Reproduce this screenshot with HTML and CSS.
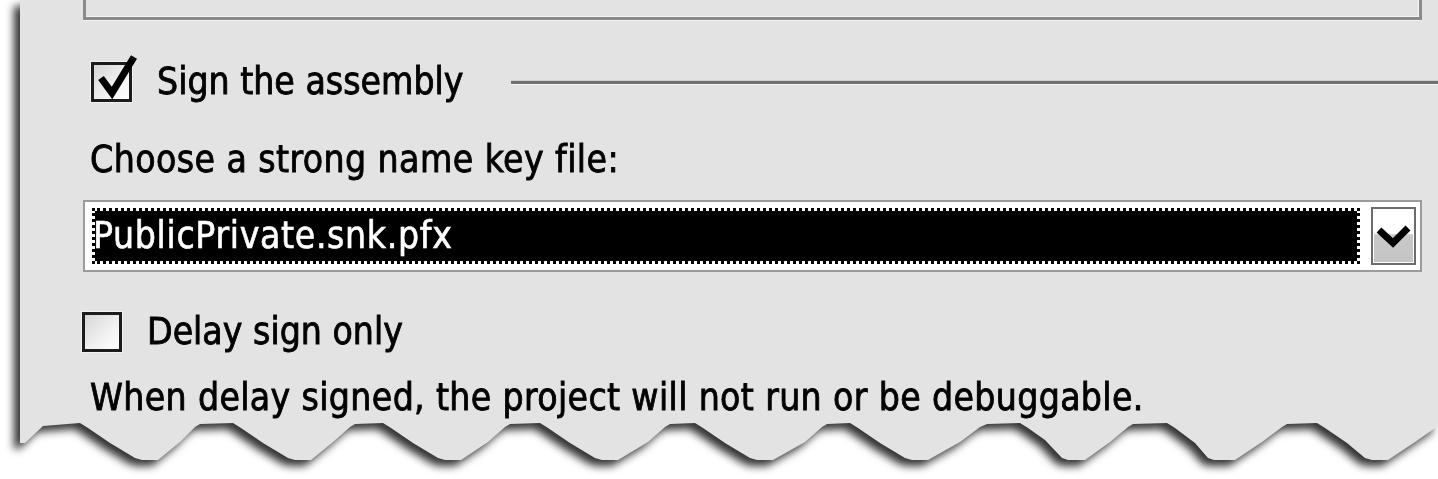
FILE: index.html
```html
<!DOCTYPE html>
<html>
<head>
<meta charset="utf-8">
<link rel="stylesheet" href="styles.css">
</head>
<body>
<div class="sheet">
  <div class="panel">
    <div class="topbox"></div>
    <div class="sign-row">
      <span class="chk chk-on">
        <svg class="tick" width="52" height="54" viewBox="0 0 52 54"><polyline points="10,26 21,41 43,5" fill="none" stroke="#000" stroke-width="7" stroke-linejoin="miter" stroke-linecap="butt"/></svg>
      </span>
      <span class="lbl sign-lbl">Sign the assembly</span>
      <span class="etch"></span>
    </div>
    <div class="lbl choose">Choose a strong name key file:</div>
    <div class="combo">
      <div class="sel"><span class="sel-text">PublicPrivate.snk.pfx</span></div>
      <div class="drop">
        <svg width="41" height="54" viewBox="0 0 41 54"><polyline points="6,21 20,34 35,19" fill="none" stroke="#000" stroke-width="7"/></svg>
      </div>
    </div>
    <div class="delay-row">
      <span class="chk chk-off"></span>
      <span class="lbl delay-lbl">Delay sign only</span>
    </div>
    <div class="lbl note">When delay signed, the project will not run or be debuggable.</div>
  </div>
  <svg class="torn" width="1418" height="50" viewBox="0 0 1418 50"><path d="M0,0 L0,23 L5,23 L23,6 L60,3 L68,8 L90,23 L115,38 L122,40 L138,40 L160,22 L175,7 L180,4 L213,3 L221,8 L243,23 L268,38 L275,40 L291,40 L313,22 L330,7 L335,4 L363,3 L371,8 L393,23 L418,38 L425,40 L441,40 L468,22 L485,7 L490,4 L520,3 L528,8 L550,23 L575,38 L582,40 L598,40 L628,22 L645,7 L650,4 L675,3 L683,8 L705,23 L730,38 L737,40 L753,40 L785,22 L802,7 L807,4 L830,3 L838,8 L860,23 L885,38 L892,40 L908,40 L940,22 L960,7 L967,4 L1000,3 L1008,8 L1025,20 L1042,38 L1048,40 L1065,40 L1090,22 L1108,7 L1113,4 L1147,3 L1155,8 L1175,23 L1188,38 L1194,40 L1215,40 L1242,22 L1262,7 L1267,4 L1297,3 L1305,8 L1327,23 L1345,38 L1352,40 L1368,40 L1395,22 L1418,6 L1418,0 Z" fill="#e3e3e3"/></svg>
</div>
</body>
</html>
```
FILE: styles.css
```css
html, body {
  margin: 0;
  padding: 0;
  background: #fff;
  width: 1438px;
  height: 479px;
  overflow: hidden;
}

.sheet {
  margin-left: 20px;
  width: 1418px;
  filter: drop-shadow(-6px 6px 4px rgba(0, 0, 0, 0.8));
}

.panel {
  background: #e3e3e3;
  padding-bottom: 2px;
  font-family: "DejaVu Sans Condensed", "DejaVu Sans", sans-serif;
  font-stretch: condensed;
  color: #000;
}

.torn {
  display: block;
}

.lbl {
  font-size: 37px;
  line-height: 40px;
  white-space: nowrap;
  -webkit-text-stroke: 0.8px #000;
}

.topbox {
  margin-left: 63px;
  margin-right: 16px;
  height: 17px;
  border: 3px solid #8a8a8a;
  border-top: none;
  box-shadow: inset -1px -1px 0 #f4f4f4, 0 1px 0 #f4f4f4;
}

.sign-row {
  margin-top: 40px;
  height: 44px;
  display: flex;
  align-items: center;
  padding-left: 71px;
}

.chk {
  position: relative;
  display: block;
  box-sizing: border-box;
  width: 41px;
  height: 40px;
  border: 3px solid #1c1c1c;
  background: linear-gradient(135deg, #d6d6d6 0%, #f2f2f2 60%, #ffffff 100%);
  box-shadow: 0 0 0 1px #f2f2f2;
  flex: none;
}

.tick {
  position: absolute;
  left: -3px;
  top: -13px;
}

.sign-lbl {
  margin-left: 25px;
}

.etch {
  flex: 1;
  margin-left: 48px;
  height: 3px;
  background: #717171;
  box-shadow: 0 1px 0 #f6f6f6, 0 -1px 0 #cfcfcf;
}

.choose {
  margin-top: 36px;
  padding-left: 70px;
  letter-spacing: 0.42px;
}

.combo {
  margin: 20px 16px 0 63px;
  height: 68px;
  border: 2px solid #9b9b9b;
  background: #fff;
  display: flex;
  align-items: center;
  gap: 11px;
  padding: 0 4px 0 7px;
}

.sel {
  flex: 1;
  box-sizing: border-box;
  height: 56px;
  background: #000;
  background-clip: padding-box;
  border: 3px dotted #000;
  display: flex;
  align-items: center;
}

.sel-text {
  color: #fff;
  font-size: 37px;
  line-height: 40px;
  margin-left: -2px;
  letter-spacing: 0.65px;
  white-space: nowrap;
  -webkit-text-stroke: 0.6px #fff;
}

.drop {
  box-sizing: border-box;
  width: 45px;
  height: 58px;
  border: 2px solid #6c6c6c;
  background: linear-gradient(#ffffff 0%, #ffffff 45%, #c9c9c9 48%, #c4c4c4 100%);
  box-shadow: inset 0 0 0 1px #fff;
  display: flex;
  align-items: center;
  justify-content: center;
}

.delay-row {
  margin-top: 40px;
  height: 40px;
  display: flex;
  align-items: center;
  padding-left: 62px;
}

.chk-off {
  width: 40px;
}

.delay-lbl {
  margin-left: 25px;
}

.note {
  margin-top: 26px;
  padding-left: 70px;
  letter-spacing: 0.35px;
}
```
